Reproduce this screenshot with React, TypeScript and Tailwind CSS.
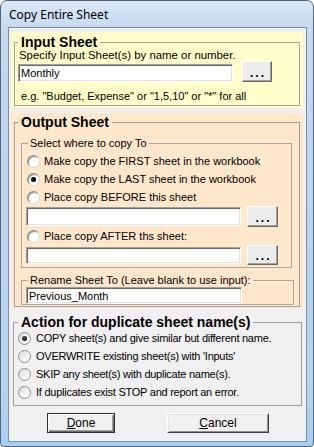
import React from "react";

function Radio({ checked }: { checked?: boolean }) {
  return (
    <span className="flex h-[13px] w-[13px] shrink-0 items-center justify-center rounded-full border border-t-[#8a8a8a] border-l-[#8a8a8a] border-r-[#d8d8d8] border-b-[#d8d8d8] bg-[radial-gradient(circle_at_65%_65%,#ffffff_45%,#e4e4e4_100%)] shadow-[inset_1px_1px_0_rgba(0,0,0,0.35)]">
      {checked && <span className="h-[5px] w-[5px] rounded-full bg-black" />}
    </span>
  );
}

function Radio7({ checked }: { checked?: boolean }) {
  return (
    <span className="flex h-[13px] w-[13px] shrink-0 items-center justify-center rounded-full border border-[#8e8f8f] bg-[linear-gradient(135deg,#d9d9d9_0%,#f4f4f4_55%,#ffffff_100%)]">
      {checked && (
        <span className="h-[5px] w-[5px] rounded-full bg-[radial-gradient(circle_at_40%_40%,#555555_0%,#111111_70%)]" />
      )}
    </span>
  );
}

function Edit({ value, w, h }: { value?: string; w: string; h: string }) {
  return (
    <input
      readOnly
      defaultValue={value ?? ""}
      className={`${w} ${h} border border-t-[#a0a0a0] border-l-[#a0a0a0] border-r-white border-b-white bg-white pl-[2px] text-[11px] text-black outline-none shadow-[inset_1px_1px_0_#696969,inset_-1px_-1px_0_#e3e3e3] font-['Liberation_Sans',Arial,sans-serif]`}
    />
  );
}

function DotsButton({ w, h }: { w: string; h: string }) {
  return (
    <button
      className={`${w} ${h} flex items-end justify-center border border-t-white border-l-white border-r-[#696969] border-b-[#696969] bg-[#ececec] pb-[2px] pl-[2px] text-[12px] font-bold leading-[12px] tracking-[2px] shadow-[inset_-1px_-1px_0_#a0a0a0]`}
    >
      ...
    </button>
  );
}

export default function App() {
  return (
    <div className="flex h-[447px] w-[314px] flex-col rounded-t-[7px] rounded-b-[4px] border border-[#55667a] bg-[linear-gradient(180deg,#dce8f6_0%,#c6daef_6%,#bcd3ec_50%,#b4d2ee_90%,#a6cff2_100%)] font-['Liberation_Sans',Arial,sans-serif] text-[11px] text-black">
      <div className="flex h-[26px] items-center pl-[8px] pt-[1px] font-['Noto_Sans',sans-serif] text-[12px] text-black">
        Copy Entire Sheet
      </div>
      <div className="mb-[4px] ml-[7px] mr-[6px] flex flex-1 flex-col border border-[#7d8fa4] bg-[#f0f0f0]">
        {/* Input Sheet */}
        <div className="ml-[2px] mr-[3px] mt-[4px] bg-[#ffffcc] px-[3px] pb-[2px] pt-[3px]">
          <fieldset className="border border-[#a0a0a0]">
            <legend className="ml-[3px] px-[3px] text-[14px] font-bold leading-[14px]">Input Sheet</legend>
            <div className="flex flex-col pb-[2px] pl-[3px]">
              <div className="pl-[1px] text-[11.4px] leading-[12px]">Specify Input Sheet(s) by name or number.</div>
              <div className="flex h-[21px] items-end">
                <Edit value="Monthly" w="w-[215px]" h="h-[18px]" />
                <div className="ml-[9px]">
                  <DotsButton w="w-[30px]" h="h-[21px]" />
                </div>
              </div>
              <div className="mt-[8px] pl-[3px] leading-[13px]">
                e.g. "Budget, Expense" or "1,5,10" or "*" for all
              </div>
            </div>
          </fieldset>
        </div>

        {/* Output Sheet */}
        <div className="ml-[2px] mr-[3px] mt-[5px] bg-[#ffe7cc] px-[3px] pb-[1px] pt-[2px]">
          <fieldset className="border border-[#a0a0a0]">
            <legend className="ml-[3px] px-[3px] text-[14px] font-bold leading-[14px]">Output Sheet</legend>
            <div className="flex flex-col pb-[1px]">
              <fieldset className="ml-[6px] mr-[7px] mt-[8px] border border-[#a8a8a8]">
                <legend className="ml-[6px] px-[2px] leading-[13px]">Select where to copy To</legend>
                <div className="flex flex-col pb-[2px] pl-[4px] pt-[2px]">
                  <div className="flex h-[18px] items-center">
                    <span className="ml-[1px]"><Radio /></span>
                    <span className="ml-[4px]">Make copy the FIRST sheet in the workbook</span>
                  </div>
                  <div className="flex h-[18px] items-center">
                    <span className="ml-[1px]"><Radio checked /></span>
                    <span className="ml-[4px]">Make copy the LAST sheet in the workbook</span>
                  </div>
                  <div className="flex h-[18px] items-center">
                    <span className="ml-[1px]"><Radio /></span>
                    <span className="ml-[4px]">Place copy BEFORE this sheet</span>
                  </div>
                  <div className="flex h-[21px] items-center">
                    <Edit w="w-[215px]" h="h-[19px]" />
                    <div className="ml-[6px]">
                      <DotsButton w="w-[31px]" h="h-[21px]" />
                    </div>
                  </div>
                  <div className="flex h-[18px] items-center">
                    <span className="ml-[1px]"><Radio /></span>
                    <span className="ml-[4px]">Place copy AFTER ths sheet:</span>
                  </div>
                  <div className="flex h-[20px] items-center">
                    <Edit w="w-[215px]" h="h-[17px]" />
                    <div className="ml-[6px]">
                      <DotsButton w="w-[31px]" h="h-[20px]" />
                    </div>
                  </div>
                </div>
              </fieldset>
              <fieldset className="ml-[6px] mr-[5px] mt-[6px] border border-[#a8a8a8]">
                <legend className="ml-[6px] px-[2px] leading-[12px]">Rename Sheet To (Leave blank to use input):</legend>
                <div className="flex pl-[4px] pt-[1px]">
                  <Edit value="Previous_Month" w="w-[216px]" h="h-[17px]" />
                </div>
              </fieldset>
            </div>
          </fieldset>
        </div>

        {/* Action */}
        <fieldset className="ml-[4px] mr-[4px] mt-[7px] border border-[#a0a0a0]">
          <legend className="ml-[4px] px-[3px] text-[14px] font-bold leading-[14px]">Action for duplicate sheet name(s)</legend>
          <div className="flex flex-col pb-[4px] pl-[4px] tracking-[-0.25px]">
            <div className="flex h-[18px] items-center">
              <Radio7 checked />
              <span className="ml-[5px]">COPY sheet(s) and give similar but different name.</span>
            </div>
            <div className="flex h-[18px] items-center">
              <Radio7 />
              <span className="ml-[5px]">OVERWRITE existing sheet(s) with 'Inputs'</span>
            </div>
            <div className="flex h-[18px] items-center">
              <Radio7 />
              <span className="ml-[5px]">SKIP any sheet(s) with duplicate name(s).</span>
            </div>
            <div className="flex h-[18px] items-center">
              <Radio7 />
              <span className="ml-[5px]">If duplicates exist STOP and report an error.</span>
            </div>
          </div>
        </fieldset>

        <div className="mt-[7px] flex h-[20px]">
          <button className="ml-[38px] h-[20px] w-[68px] border border-[#303030] bg-[#f0f0f0] text-[12px] shadow-[inset_1px_1px_0_#ffffff,inset_-1px_-1px_0_#696969,inset_-2px_-2px_0_#a0a0a0]">
            <u>D</u>one
          </button>
          <button className="ml-[52px] h-[20px] w-[102px] border border-t-white border-l-white border-r-[#404040] border-b-[#404040] bg-[#f0f0f0] text-[12px] shadow-[inset_1px_1px_0_#e3e3e3,inset_-1px_-1px_0_#909090]">
            <u>C</u>ancel
          </button>
        </div>
      </div>
    </div>
  );
}
